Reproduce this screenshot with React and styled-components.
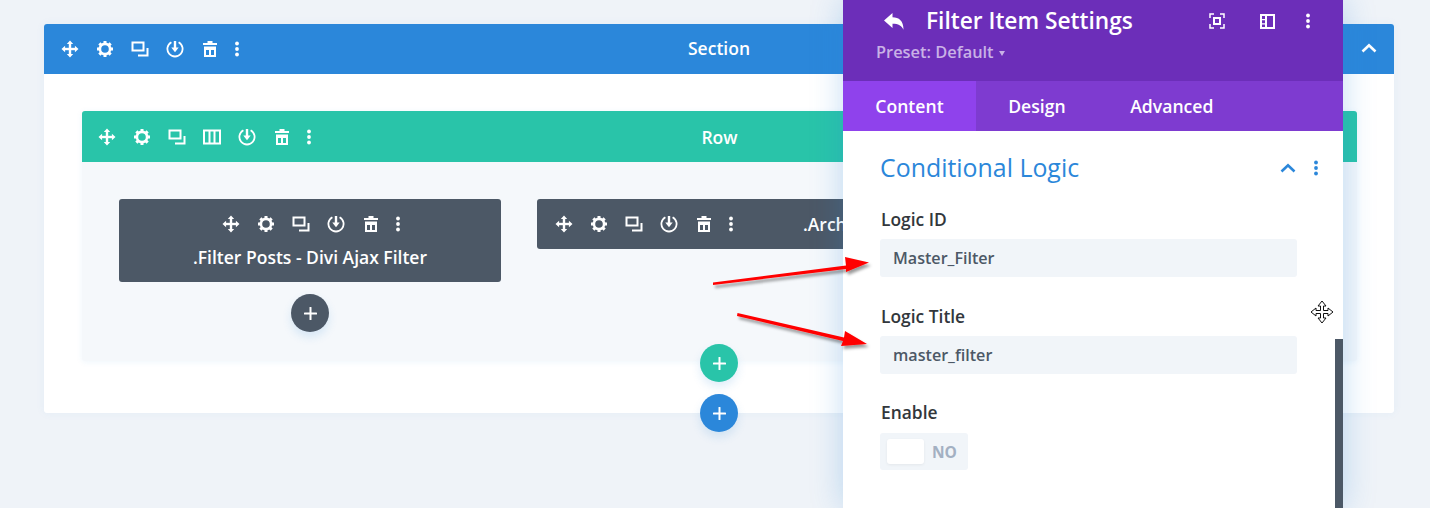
import React from 'react'
import styled, { createGlobalStyle } from 'styled-components'

const GlobalStyle = createGlobalStyle`
    html, body {
        margin: 0;
        height: 100%;
        overflow: hidden;
        background: #eff3f8;
        font-family: "Open Sans", "Liberation Sans", sans-serif;
    }
    * { box-sizing: border-box; }
`

const Page = styled.div`
    position: relative;
    width: 1430px;
    height: 508px;
    padding: 24px 36px 0 44px;
    overflow: hidden;
`

const SectionCard = styled.section`
    position: relative;
    height: 389px;
    background: #fff;
    border-radius: 3px;
    box-shadow: 0 0 10px rgba(43, 135, 218, .06);
`

const Bar = styled.div`
    position: relative;
    display: flex;
    align-items: center;
    height: ${p => p.$height}px;
    padding-left: ${p => p.$inset}px;
    background: ${p => p.$color};
    border-radius: 3px 3px 0 0;
    color: #fff;
`

const BarTitle = styled.div`
    position: absolute;
    left: 0;
    right: 0;
    margin-top: ${p => p.$lift || 0}px;
    text-align: center;
    font-size: 17.5px;
    font-weight: 600;
    line-height: 22px;
`

const ToolSet = styled.div`
    display: flex;
    align-items: center;
    height: 20px;
`

const Tool = styled.span`
    display: flex;
    align-items: center;
    justify-content: center;
    width: ${p => (p.$narrow ? 19 : 35)}px;
    height: 20px;
    color: #fff;
`

const Collapse = styled.span`
    position: absolute;
    right: 17px;
    top: 19px;
    display: flex;
`

const SectionBody = styled.div`
    padding: 37px 37px 0 38px;
`

const RowCard = styled.div`
    position: relative;
    height: 250px;
    background: #f5f8fb;
    border-radius: 3px;
    box-shadow: 0 1px 6px rgba(43, 135, 218, .08);
`

const RowBody = styled.div`
    display: flex;
    gap: 36px;
    padding: 37px;
`

const Column = styled.div`
    display: flex;
    flex-direction: column;
    align-items: center;
    width: ${p => p.$width}px;
`

const ModuleStack = styled.div`
    display: flex;
    flex-direction: column;
    align-items: center;
    gap: 12px;
    width: 100%;
    height: 83px;
    padding-top: 15px;
    background: #4c5866;
    border-radius: 3px;
    color: #fff;
`

const ModuleTitle = styled.div`
    font-size: 17.5px;
    font-weight: 600;
    line-height: 22px;
    white-space: nowrap;
`

const ModuleLine = styled.div`
    display: flex;
    align-items: center;
    width: 100%;
    height: 50px;
    padding-left: 9px;
    background: #4c5866;
    border-radius: 3px;
    color: #fff;
`

const LineTitle = styled(ModuleTitle)`
    margin-left: 63px;
`

const AddButton = styled.span`
    display: flex;
    align-items: center;
    justify-content: center;
    width: 38px;
    height: 38px;
    border-radius: 50%;
    background: ${p => p.$color};
    box-shadow: 0 5px 10px rgba(43, 135, 218, .15);
    flex: none;
`

const ModuleAdd = styled(AddButton)`
    margin-top: 12px;
`

const EdgeAdd = styled(AddButton)`
    position: absolute;
    left: 656px;
    top: ${p => p.$top}px;
`

const Panel = styled.aside`
    position: absolute;
    left: 843px;
    top: 0;
    width: 500px;
    height: 508px;
    background: #fff;
    box-shadow: 0 0 30px rgba(43, 135, 218, .28);
    overflow: hidden;
`

const PanelHead = styled.header`
    position: relative;
    height: 81px;
    padding: 5px 0 0 33px;
    background: #6c2eb9;
    color: #fff;
`

const HeadRow = styled.div`
    display: flex;
    align-items: center;
    height: 32px;
`

const BackIcon = styled.span`
    display: flex;
    width: 50px;
    padding-left: 8px;
`

const HeadTitle = styled.h1`
    margin: 0;
    flex: 1;
    font-size: 22.7px;
    font-weight: 600;
    line-height: 32px;
`

const HeadTools = styled.div`
    display: flex;
    align-items: center;
    padding-right: 19px;
`

const HeadTool = styled.span`
    display: flex;
    justify-content: center;
    width: ${p => p.$width}px;
`

const Preset = styled.div`
    display: flex;
    align-items: center;
    gap: 5px;
    margin-top: 4px;
    font-size: 16.4px;
    font-weight: 600;
    line-height: 22px;
    color: #c9b1e6;
`

const Caret = styled.span`
    width: 0;
    height: 0;
    margin-top: 3px;
    border: 3px solid transparent;
    border-top: 5px solid #c9b1e6;
    border-bottom: 0;
`

const Tabs = styled.nav`
    display: flex;
    height: 50px;
    background: #7e3bd0;
`

const Tab = styled.span`
    display: flex;
    align-items: center;
    padding: 0 32.3px;
    background: ${p => (p.$active ? '#8f42ec' : 'transparent')};
    color: #fff;
    font-size: 17.6px;
    font-weight: 600;
`

const PanelBody = styled.div`
    position: relative;
    padding: 18px 46px 0 37px;
`

const GroupHead = styled.div`
    display: flex;
    align-items: center;
    justify-content: space-between;
    height: 36px;
`

const GroupTitle = styled.h2`
    margin: 0;
    font-size: 24.9px;
    font-weight: 400;
    line-height: 36px;
    color: #2b87da;
`

const GroupTools = styled.div`
    display: flex;
    align-items: center;
    gap: 17px;
    margin-right: -22px;
    margin-top: 1px;
    color: #2b87da;
`

const Field = styled.div`
    margin-top: ${p => p.$top}px;
`

const Label = styled.label`
    display: block;
    margin-bottom: ${p => p.$gap || 9}px;
    padding-left: 1px;
    font-size: 17.4px;
    font-weight: 600;
    line-height: 22px;
    color: #32373c;
`

const TextInput = styled.div`
    height: 38px;
    padding: 0 13px;
    background: #f1f5f9;
    border-radius: 3px;
    font-size: 16.1px;
    font-weight: 600;
    line-height: 38px;
    color: #4c5866;
`

const Toggle = styled.div`
    display: flex;
    align-items: center;
    width: 88px;
    height: 37px;
    padding-left: 7px;
    background: #f1f5f9;
    border-radius: 3px;
`

const Knob = styled.span`
    width: 37px;
    height: 25px;
    background: #fff;
    border-radius: 3px;
    box-shadow: 0 1px 3px rgba(0, 0, 0, .06);
`

const ToggleText = styled.span`
    margin-left: 8px;
    font-size: 15.5px;
    font-weight: 700;
    color: #a3b0c2;
`

const Scrollbar = styled.div`
    position: absolute;
    right: 0;
    top: 339px;
    width: 8px;
    height: 169px;
    background: #4c5866;
`

const Overlay = styled.svg`
    position: absolute;
    left: 0;
    top: 0;
    pointer-events: none;
`

const MoveIcon = () => (
    <svg width="18" height="18" viewBox="0 0 18 18" fill="currentColor">
        <rect x="7.8" y="3" width="2.4" height="12" />
        <rect x="3" y="7.8" width="12" height="2.4" />
        <path d="M9 .5l3.2 3.6H5.8zM9 17.5l-3.2-3.6h6.4zM.5 9l3.6-3.2v6.4zM17.5 9l-3.6 3.2V5.8z" />
    </svg>
)

const GearIcon = () => (
    <svg width="18" height="18" viewBox="0 0 18 18" fill="none" stroke="currentColor">
        <circle cx="9" cy="9" r="5.1" strokeWidth="2.6" />
        {[0, 45, 90, 135].map(a => (
            <path key={a} d="M9 1v2.5M9 14.5V17" strokeWidth="3" transform={`rotate(${a} 9 9)`} />
        ))}
    </svg>
)

const DuplicateIcon = () => (
    <svg width="18" height="18" viewBox="0 0 18 18" fill="none" stroke="currentColor" strokeWidth="2">
        <rect x="1.5" y="2.5" width="11" height="8" />
        <path d="M16.5 8v7.5H7" />
    </svg>
)

const ColumnsIcon = () => (
    <svg width="18" height="18" viewBox="0 0 18 18" fill="none" stroke="currentColor" strokeWidth="2">
        <rect x="1" y="2.5" width="16" height="13" />
        <path d="M6.5 3v12M11.5 3v12" />
    </svg>
)

const SaveIcon = () => (
    <svg width="18" height="18" viewBox="0 0 18 18" fill="none" stroke="currentColor" strokeWidth="1.8">
        <path d="M5.4 2.2a7.6 7.6 0 1 0 7.2 0" />
        <path d="M9 1v7" strokeWidth="2.4" />
        <path d="M5.3 7.4h7.4L9 12.2z" fill="currentColor" stroke="none" />
    </svg>
)

const TrashIcon = () => (
    <svg width="18" height="18" viewBox="0 0 18 18" fill="currentColor">
        <path d="M6.5 1h5v2h4.5v2H2V3h4.5z" />
        <path fillRule="evenodd" d="M3 6.5h12V17H3zM5 10v5h3v-5zM10 10v5h3v-5z" />
    </svg>
)

const DotsIcon = () => (
    <svg width="6" height="16" viewBox="0 0 6 16" fill="currentColor">
        <circle cx="3" cy="2.5" r="1.9" />
        <circle cx="3" cy="8" r="1.9" />
        <circle cx="3" cy="13.5" r="1.9" />
    </svg>
)

const ChevronUp = () => (
    <svg width="16" height="10" viewBox="0 0 16 10" fill="none" stroke="currentColor" strokeWidth="2.6">
        <path d="M1.5 8.5L8 2.2l6.5 6.3" />
    </svg>
)

const PlusIcon = () => (
    <svg width="13" height="13" viewBox="0 0 13 13" fill="#fff">
        <rect x="5.5" y="0" width="2" height="13" rx=".6" />
        <rect x="0" y="5.5" width="13" height="2" rx=".6" />
    </svg>
)

const BackArrow = () => (
    <svg width="20" height="17" viewBox="0 0 20 17" fill="#fff">
        <path d="M8.5 0v4.3c6.5 0 11 3.6 11 12.4-2-4.3-5-6-11-6V15L0 7.5z" />
    </svg>
)

const FocusIcon = () => (
    <svg width="16" height="16" viewBox="0 0 16 16" fill="none" stroke="#fff" strokeWidth="1.5">
        <path d="M1 5V1h4M11 1h4v4M15 11v4h-4M5 15H1v-4" />
        <rect x="5" y="5" width="6" height="6" strokeWidth="2" />
    </svg>
)

const SplitIcon = () => (
    <svg width="15" height="15" viewBox="0 0 15 15" fill="#fff">
        <path fillRule="evenodd" d="M0 0h15v15H0zM2 2v3h3V2zM2 6.2v3h3v-3zM2 10.4V13h3v-2.6zM7 2v11h6V2z" />
    </svg>
)

const tools = {
    move: MoveIcon,
    gear: GearIcon,
    copy: DuplicateIcon,
    cols: ColumnsIcon,
    save: SaveIcon,
    trash: TrashIcon,
}

const Tools = ({ items }) => (
    <ToolSet>
        {items.map(name => {
            const Icon = tools[name]
            return <Tool key={name}><Icon /></Tool>
        })}
        <Tool $narrow><DotsIcon /></Tool>
    </ToolSet>
)

const base = ['move', 'gear', 'copy', 'save', 'trash']
const withCols = ['move', 'gear', 'copy', 'cols', 'save', 'trash']

const Arrows = () => (
    <Overlay width="1430" height="508" viewBox="0 0 1430 508">
        <defs>
            <filter id="arrowShade" x="-10%" y="-30%" width="120%" height="170%">
                <feDropShadow dx="2" dy="3" stdDeviation="1.5" floodColor="#000" floodOpacity=".4" />
            </filter>
        </defs>
        <g fill="#f00" filter="url(#arrowShade)">
            <path d="M713 282.5L846 265.5 845 257 869 262.5 846 272 846 269 713 285z" />
            <path d="M737.5 313L844 337.5 845 331 867 344 841 346 843 341 737 316z" />
        </g>
    </Overlay>
)

const MoveCursor = () => (
    <Overlay width="1430" height="508" viewBox="0 0 1430 508">
        <path
            d="M1322 301l4 5h-2.500v4.500h4.500V308l5 4-5 4v-2.500h-4.500v4.500h2.500l-4 5-4-5h2.500v-4.500H1316v2.500l-5-4 5-4v2.500h4.500V306H1318z"
            fill="#fff"
            stroke="#111"
            strokeWidth="1"
        />
    </Overlay>
)

const App = () => (
    <>
        <GlobalStyle />
        <Page>
            <SectionCard>
                <Bar $height={50} $color="#2b87da" $inset={8}>
                    <Tools items={base} />
                    <BarTitle $lift={-2}>Section</BarTitle>
                    <Collapse><ChevronUp /></Collapse>
                </Bar>
                <SectionBody>
                    <RowCard>
                        <Bar $height={51} $color="#29c4a9" $inset={7}>
                            <Tools items={withCols} />
                            <BarTitle>Row</BarTitle>
                        </Bar>
                        <RowBody>
                            <Column $width={382}>
                                <ModuleStack>
                                    <Tools items={base} />
                                    <ModuleTitle>.Filter Posts - Divi Ajax Filter</ModuleTitle>
                                </ModuleStack>
                                <ModuleAdd $color="#4c5866"><PlusIcon /></ModuleAdd>
                            </Column>
                            <Column $width={783}>
                                <ModuleLine>
                                    <Tools items={base} />
                                    <LineTitle>.Arch</LineTitle>
                                </ModuleLine>
                            </Column>
                        </RowBody>
                    </RowCard>
                </SectionBody>
                <EdgeAdd $color="#29c4a9" $top={320}><PlusIcon /></EdgeAdd>
                <EdgeAdd $color="#2b87da" $top={370}><PlusIcon /></EdgeAdd>
            </SectionCard>
            <Panel>
                <PanelHead>
                    <HeadRow>
                        <BackIcon><BackArrow /></BackIcon>
                        <HeadTitle>Filter Item Settings</HeadTitle>
                        <HeadTools>
                            <HeadTool $width={50}><FocusIcon /></HeadTool>
                            <HeadTool $width={50}><SplitIcon /></HeadTool>
                            <HeadTool $width={32}><DotsIcon /></HeadTool>
                        </HeadTools>
                    </HeadRow>
                    <Preset>Preset: Default<Caret /></Preset>
                </PanelHead>
                <Tabs>
                    <Tab $active>Content</Tab>
                    <Tab>Design</Tab>
                    <Tab>Advanced</Tab>
                </Tabs>
                <PanelBody>
                    <GroupHead>
                        <GroupTitle>Conditional Logic</GroupTitle>
                        <GroupTools>
                            <ChevronUp />
                            <DotsIcon />
                        </GroupTools>
                    </GroupHead>
                    <Field $top={23}>
                        <Label>Logic ID</Label>
                        <TextInput>Master_Filter</TextInput>
                    </Field>
                    <Field $top={28}>
                        <Label>Logic Title</Label>
                        <TextInput>master_filter</TextInput>
                    </Field>
                    <Field $top={27}>
                        <Label $gap={10}>Enable</Label>
                        <Toggle>
                            <Knob />
                            <ToggleText>NO</ToggleText>
                        </Toggle>
                    </Field>
                </PanelBody>
                <Scrollbar />
            </Panel>
            <Arrows />
            <MoveCursor />
        </Page>
    </>
)

export default App
